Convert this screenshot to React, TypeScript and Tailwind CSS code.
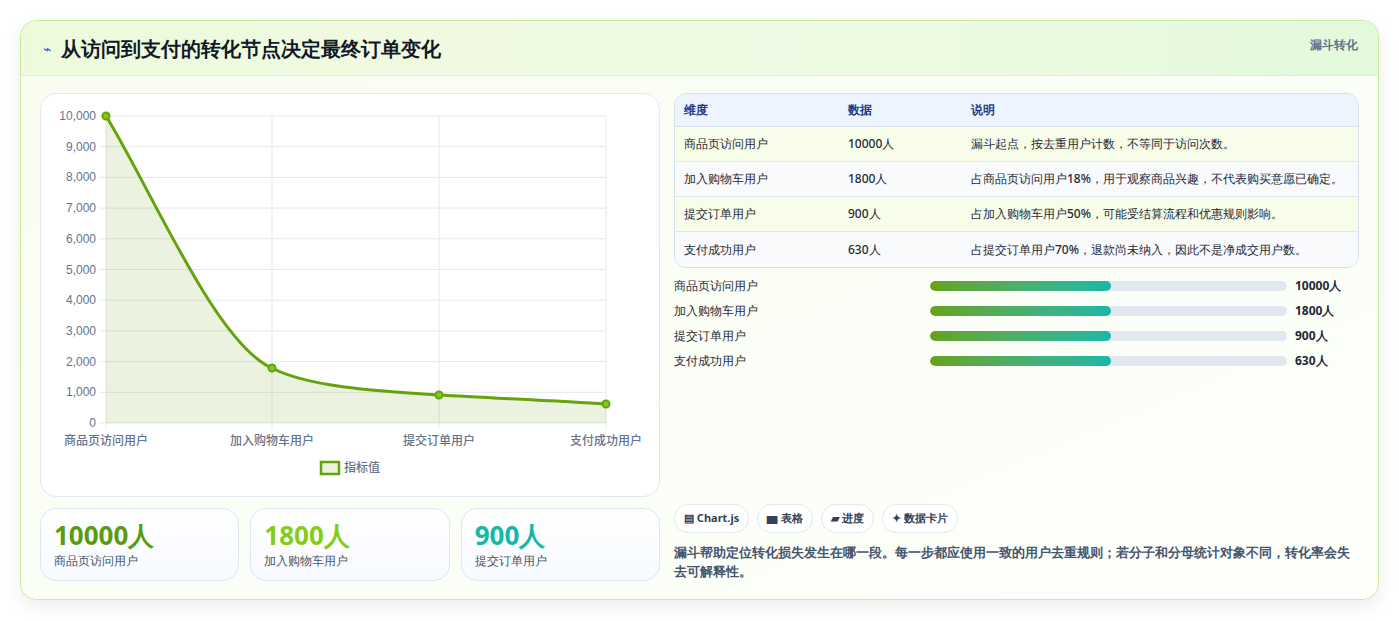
import React from "react";

const rows = [
  ["商品页访问用户", "10000人", "漏斗起点，按去重用户计数，不等同于访问次数。"],
  ["加入购物车用户", "1800人", "占商品页访问用户18%，用于观察商品兴趣，不代表购买意愿已确定。"],
  ["提交订单用户", "900人", "占加入购物车用户50%，可能受结算流程和优惠规则影响。"],
  ["支付成功用户", "630人", "占提交订单用户70%，退款尚未纳入，因此不是净成交用户数。"],
];

function Chart() {
  const yt = [10000, 9000, 8000, 7000, 6000, 5000, 4000, 3000, 2000, 1000, 0];
  const y = (v: number) => 22 + (1 - v / 10000) * 307;
  const xs = [65, 231, 398, 565];
  const labels = ["商品页访问用户", "加入购物车用户", "提交订单用户", "支付成功用户"];
  const line = "M65,22 C110,95 175,250 231,274 C265,292 330,297 398,301 C450,304 520,307 565,310";
  return (
    <svg width="620" height="403" className="block">
      {yt.map((v) => (
        <g key={v}>
          <line x1={58} x2={565} y1={y(v)} y2={y(v)} stroke="#e5e7eb" strokeWidth="1" />
          <text x={55} y={y(v) + 4} textAnchor="end" fontSize="12" fill="#64748b" fontFamily="Liberation Sans, sans-serif">{v.toLocaleString("en-US")}</text>
        </g>
      ))}
      {xs.map((x, i) => (
        <g key={x}>
          <line x1={x} x2={x} y1={22} y2={335} stroke="#e5e7eb" />
          <text x={x} y={351} textAnchor="middle" fontSize="12" fontWeight="500" fill="#64748b" fontFamily="Noto Sans CJK SC, sans-serif">{labels[i]}</text>
        </g>
      ))}
      <path d={line + " L565,329 L65,329 Z"} fill="#65a30d" fillOpacity="0.13" />
      <path d={line} fill="none" stroke="#65a30d" strokeWidth="3" />
      {[[65, 22], [231, 274], [398, 301], [565, 310]].map(([a, b]) => (
        <circle key={a} cx={a} cy={b} r="3.5" fill="#84cc16" stroke="#65a30d" strokeWidth="2" />
      ))}
      <rect x={280} y={368} width={18} height={12} fill="#eaf2dc" stroke="#65a30d" strokeWidth="2.5" />
      <text x={303} y={378} fontSize="12" fontWeight="500" fill="#64748b" fontFamily="Noto Sans CJK SC, sans-serif">指标值</text>
    </svg>
  );
}

export default function App() {
  return (
    <div className="bg-white px-5 pt-5 pb-[22px] font-['Noto_Sans_CJK_SC',sans-serif]">
      <div className="rounded-2xl border border-[#cde99a] shadow-[0_6px_18px_rgba(0,0,0,0.08)] overflow-hidden bg-gradient-to-br from-[#f9fdf0] to-[#fdfffb]">
        <div className="h-[55px] flex items-start justify-between px-5 pt-[14px] border-b border-[#e2ecd6] bg-gradient-to-r from-[#eefadc] via-[#f0fbe4] to-[#e3f9dc]">
          <div className="flex items-center gap-[10px] pl-[2px]">
            <span className="text-[#3b5bdb] text-sm">⌁</span>
            <span className="text-[20px] font-bold text-[#111827] leading-[28px]">从访问到支付的转化节点决定最终订单变化</span>
          </div>
          <span className="text-xs font-bold text-slate-500 mt-[2px]">漏斗转化</span>
        </div>
        <div className="flex gap-[14px] px-[19px] pt-[17px] pb-[18px]">
          <div className="w-[620px] flex flex-col gap-[11px]">
            <div className="h-[404px] rounded-2xl border border-[#e2e8f0] bg-white">
              <Chart />
            </div>
            <div className="flex gap-[11px]">
              {[["10000人", "商品页访问用户", "text-[#5a9a0f]"], ["1800人", "加入购物车用户", "text-[#84cc16]"], ["900人", "提交订单用户", "text-[#14b8a6]"]].map(([v, l, c]) => (
                <div key={l} className="flex-1 h-[73px] rounded-2xl border border-[#dbe7f3] bg-gradient-to-b from-white to-[#f7faff] px-[13px] pt-[10px]">
                  <div className={`text-[26px] font-bold leading-[32px] ${c}`}>{v}</div>
                  <div className="text-xs font-medium text-slate-600 mt-[2px]">{l}</div>
                </div>
              ))}
            </div>
          </div>
          <div className="flex-1 flex flex-col">
            <div className="rounded-xl border border-[#d6e0ea] overflow-hidden text-xs font-medium text-[#1f2937]">
              <div className="h-[33px] flex items-center bg-[#edf4fd] border-b border-[#d6e0ea] font-bold text-[#1e3a8a]">
                <div className="w-[173px] pl-[9px]">维度</div>
                <div className="w-[123px]">数据</div>
                <div>说明</div>
              </div>
              {rows.map((r, i) => (
                <div key={r[0]} className={`h-[35px] flex items-center ${i % 2 ? "bg-[#f8fafc]" : "bg-[#f8fde9]"} ${i < 3 ? "border-b border-[#e2e8f0]" : ""}`}>
                  <div className="w-[173px] pl-[9px]">{r[0]}</div>
                  <div className="w-[123px]">{r[1]}</div>
                  <div>{r[2]}</div>
                </div>
              ))}
            </div>
            <div className="flex flex-col gap-[9px] mt-[10px] text-xs font-medium text-[#1f2937]">
              {rows.map((r) => (
                <div key={r[0]} className="flex items-center h-[16px]">
                  <div className="w-[256px]">{r[0]}</div>
                  <div className="w-[357px] h-[10px] rounded-full bg-[#e2e8f0] overflow-hidden">
                    <div className="w-[181px] h-full rounded-full bg-gradient-to-r from-[#65a30d] to-[#14b8a6]" />
                  </div>
                  <div className="ml-2 font-bold">{r[1]}</div>
                </div>
              ))}
            </div>
            <div className="mt-auto flex gap-2 text-[11px] font-bold text-slate-700">
              {["▤ Chart.js", "▆ 表格", "▰ 进度", "✦ 数据卡片"].map((c) => (
                <span key={c} className="h-[29px] px-[9px] flex items-center rounded-full border border-[#e2e8f0] bg-white">{c}</span>
              ))}
            </div>
            <p className="mt-[10px] text-[13px] leading-[19px] font-bold text-slate-600">漏斗帮助定位转化损失发生在哪一段。每一步都应使用一致的用户去重规则；若分子和分母统计对象不同，转化率会失去可解释性。</p>
          </div>
        </div>
      </div>
    </div>
  );
}
